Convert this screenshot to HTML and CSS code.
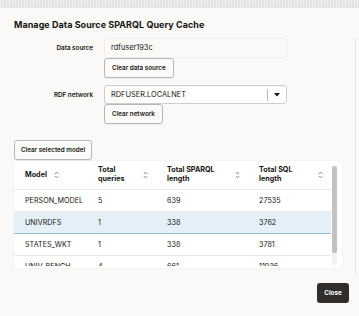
FILE: index.html
```html
<!DOCTYPE html>
<html lang="en">
<head>
    <meta charset="UTF-8">
    <meta name="viewport" content="width=device-width, initial-scale=1.0">
    <title>Manage Data Source SPARQL Query Cache</title>
    <link rel="stylesheet" href="styles.css">
</head>
<body>
    <div class="topband"></div>

    <div class="dialog">
        <h1 class="title">Manage Data Source SPARQL Query Cache</h1>

        <div class="body">
            <div class="field">
                <label class="label">Data source</label>
                <div class="control">
                    <div class="input readonly">rdfuser193c</div>
                    <button class="btn">Clear data source</button>
                </div>
            </div>

            <div class="field field-second">
                <label class="label">RDF network</label>
                <div class="control">
                    <div class="input select">
                        <span class="select-value">RDFUSER.LOCALNET</span>
                        <span class="select-arrow">
                            <svg width="6" height="4" viewBox="0 0 6 4"><path d="M0 0 H6 L3 3.6 Z" fill="#161513"/></svg>
                        </span>
                    </div>
                    <button class="btn btn-narrow">Clear network</button>
                </div>
            </div>

            <button class="btn btn-model">Clear selected model</button>

            <div class="card">
                <div class="table-wrap">
                    <table class="grid">
                        <colgroup>
                            <col style="width:73px">
                            <col style="width:69px">
                            <col style="width:92px">
                            <col style="width:83px">
                        </colgroup>
                        <thead>
                            <tr>
                                <th><div class="th"><span>Model</span><span class="sort sort-near"><svg width="5" height="8" viewBox="0 0 5 8"><path d="M0.8 3 L2.5 1.2 L4.2 3 M0.8 5 L2.5 6.8 L4.2 5" fill="none" stroke="#6f6e6c" stroke-width="0.8"/></svg></span></div></th>
                                <th><div class="th"><span>Total<br>queries</span><span class="sort"><svg width="5" height="8" viewBox="0 0 5 8"><path d="M0.8 3 L2.5 1.2 L4.2 3 M0.8 5 L2.5 6.8 L4.2 5" fill="none" stroke="#6f6e6c" stroke-width="0.8"/></svg></span></div></th>
                                <th><div class="th"><span>Total SPARQL<br>length</span><span class="sort"><svg width="5" height="8" viewBox="0 0 5 8"><path d="M0.8 3 L2.5 1.2 L4.2 3 M0.8 5 L2.5 6.8 L4.2 5" fill="none" stroke="#6f6e6c" stroke-width="0.8"/></svg></span></div></th>
                                <th><div class="th"><span>Total SQL<br>length</span><span class="sort"><svg width="5" height="8" viewBox="0 0 5 8"><path d="M0.8 3 L2.5 1.2 L4.2 3 M0.8 5 L2.5 6.8 L4.2 5" fill="none" stroke="#6f6e6c" stroke-width="0.8"/></svg></span></div></th>
                            </tr>
                        </thead>
                        <tbody>
                            <tr><td>PERSON_MODEL</td><td>5</td><td>639</td><td>27535</td></tr>
                            <tr class="selected"><td>UNIVRDFS</td><td>1</td><td>338</td><td>3762</td></tr>
                            <tr><td>STATES_WKT</td><td>1</td><td>338</td><td>3781</td></tr>
                            <tr><td>UNIV_BENCH</td><td>4</td><td>661</td><td>11036</td></tr>
                        </tbody>
                    </table>
                </div>
                <div class="scrollbar"><div class="thumb"></div></div>
            </div>
        </div>

        <div class="footer">
            <button class="btn-close">Close</button>
        </div>
    </div>
</body>
</html>
```

FILE: styles.css
```css
body {
    margin: 0;
    padding: 0;
    font-family: Inter, "Noto Sans", sans-serif;
    background-color: #faf9f7;
    color: #161513;
    width: 359px;
    height: 316px;
    overflow: hidden;
}

.topband {
    height: 8px;
    background-color: #e7e6e4;
    background-image: repeating-linear-gradient(90deg, rgba(255,255,255,0.5) 0 1px, transparent 1px 3px),
                      repeating-linear-gradient(0deg, rgba(0,0,0,0.04) 0 1px, transparent 1px 2px);
}

.dialog {
    padding-left: 14px;
}

.title {
    margin: 0;
    height: 30px;
    line-height: 34px;
    font-size: 9px;
    font-weight: 700;
    letter-spacing: 0.05px;
}

.body {
    margin-right: 3px;
    border-right: 1px solid #e9e8e6;
    padding-bottom: 7px;
}

.field {
    display: grid;
    grid-template-columns: 79px 183px;
    column-gap: 11px;
}

.field-second {
    margin-top: 7px;
}

.label {
    justify-self: end;
    height: 20px;
    line-height: 20px;
    font-size: 6.3px;
    font-weight: 600;
}

.control {
    display: flex;
    flex-direction: column;
    align-items: flex-start;
}

.input {
    box-sizing: border-box;
    width: 183px;
    height: 20px;
    line-height: 18px;
    padding: 0 6px;
    font-size: 7.4px;
    border-radius: 3px;
}

.readonly {
    background-color: #fbfaf9;
    border: 1px solid #efeeec;
}

.select {
    display: flex;
    align-items: center;
    background-color: #fff;
    border: 1px solid #cfcdca;
    height: 19px;
    padding-right: 0;
}

.select-value {
    flex: 1;
}

.select-arrow {
    display: flex;
    align-items: center;
    justify-content: center;
    width: 18px;
    height: 12px;
    border-left: 1px solid #bdbbb8;
}

.btn {
    box-sizing: border-box;
    height: 20px;
    padding: 0 7px;
    background-color: #fcfbfa;
    border: 1px solid #b9b7b4;
    border-radius: 3px;
    font-family: inherit;
    font-size: 6.3px;
    font-weight: 600;
    color: #161513;
    box-shadow: 0 1px 0 rgba(0, 0, 0, 0.05);
}

.btn-model {
    margin-top: 16px;
    width: 78px;
    padding: 0;
}

.card {
    display: flex;
    width: 328px;
    height: 107px;
    margin-top: 1px;
    background-color: #fff;
    border-radius: 3px;
    box-shadow: 0 0 2px rgba(0, 0, 0, 0.08);
    overflow: hidden;
}

.table-wrap {
    width: 317px;
    height: 105px;
    overflow: hidden;
}

.grid {
    border-collapse: collapse;
    table-layout: fixed;
    width: 317px;
    font-size: 7.2px;
}

.grid th {
    height: 28px;
    padding: 0 8px 0 11px;
    text-align: left;
    font-weight: 700;
    line-height: 8.6px;
    border-bottom: 1px solid #eceae8;
}

.th {
    display: flex;
    align-items: center;
}

.sort {
    display: flex;
    margin-left: auto;
}

.sort-near {
    margin-left: 7px;
}

.grid td {
    height: 21px;
    padding: 0 0 0 11px;
    border-bottom: 1px solid #eceae8;
    white-space: nowrap;
}

.grid tr.selected td {
    background-color: #e4f0f8;
    border-top: 1px solid #93c1d6;
    border-bottom: 1px solid #93c1d6;
}

.scrollbar {
    width: 5px;
    margin: 5px 0 3px 1px;
    background-color: #f3f2f0;
    border-radius: 2px;
}

.thumb {
    height: 87px;
    background-color: #c3c2c0;
    border-radius: 2px;
}

.footer {
    display: flex;
    justify-content: flex-end;
    padding: 8px 10px 0 0;
}

.btn-close {
    width: 32px;
    height: 20px;
    padding: 0;
    border: none;
    border-radius: 3px;
    background-color: #312d2a;
    color: #fff;
    font-family: inherit;
    font-size: 6.3px;
    font-weight: 700;
}
```
